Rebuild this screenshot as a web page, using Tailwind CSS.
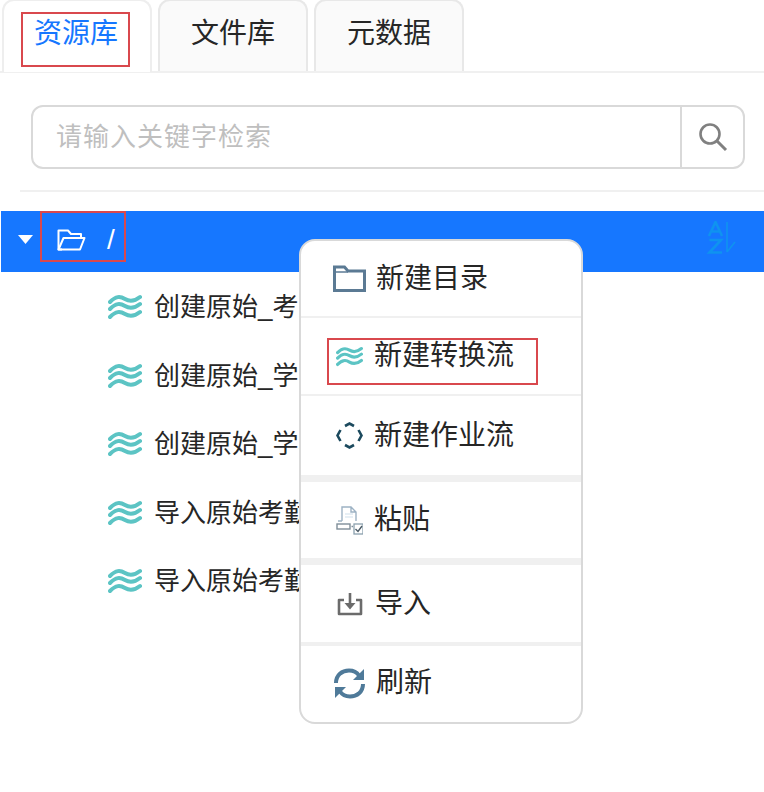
<!DOCTYPE html>
<html lang="zh-CN">
  <head>
    <meta charset="UTF-8" />
    <title>资源库</title>
    <script src="https://cdn.jsdelivr.net/npm/@tailwindcss/browser@4"></script>
  </head>
  <body class="bg-white text-[#262626] font-['Liberation_Sans','Noto_Sans_CJK_SC',sans-serif]">
    <svg class="hidden">
      <symbol id="waves" viewBox="0 0 34 26">
        <g fill="none" stroke="#5cc4c4" stroke-width="4" stroke-linecap="round">
          <path d="M2 8 C8 2 12 2 17 5 C22 8 27 7 32 3" />
          <path d="M2 15 C8 9 12 9 17 12 C22 15 27 14 32 10" />
          <path d="M2 23 C8 17 12 17 17 20 C22 23 27 22 32 18" />
        </g>
      </symbol>
    </svg>

    <div class="relative w-[764px] h-[792px] overflow-hidden">
      <!-- tabs -->
      <div class="h-[73px] flex gap-[6px] pl-[2px] border-b-2 border-[#f0f0f0]">
        <div class="w-[150px] h-[73px] -mt-px bg-white border-2 border-b-0 border-[#eeeeee] rounded-t-xl flex items-center justify-center pb-[5px] text-[28px] leading-none text-[#1677ff] pr-[2px]">资源库</div>
        <div class="w-[150px] h-[72px] -mt-px bg-[#fafafa] border-2 border-b-0 border-[#e8e8e8] rounded-t-xl flex items-center justify-center pb-[5px] text-[28px] leading-none">文件库</div>
        <div class="w-[150px] h-[72px] -mt-px bg-[#fafafa] border-2 border-b-0 border-[#e8e8e8] rounded-t-xl flex items-center justify-center pb-[5px] text-[28px] leading-none">元数据</div>
      </div>

      <!-- search -->
      <div class="ml-[31px] mt-[32px] w-[714px] h-[64px] flex border-2 border-[#d9d9d9] rounded-xl">
        <div class="flex-1 flex items-center pl-[23px] text-[26px] leading-none text-[#bfbfbf] tracking-[1px]">请输入关键字检索</div>
        <div class="w-[63px] border-l-2 border-[#d9d9d9] flex items-center justify-center">
          <svg width="32" height="32" viewBox="0 0 32 32" fill="none" stroke="#808080" stroke-width="2.6">
            <circle cx="13" cy="13" r="9.5" />
            <path d="M20 20 L29 29" stroke-width="3" />
          </svg>
        </div>
      </div>
      <div class="ml-[20px] mt-[21px] h-[2px] bg-[#f0f0f0]"></div>

      <!-- tree -->
      <div class="ml-px mt-[19px] h-[61px] bg-[#1677ff] flex items-center text-white">
        <svg class="ml-[17px] -mt-[4px]" width="15" height="9" viewBox="0 0 15 9"><path d="M0 0 H15 L7.5 9 Z" fill="#fff" /></svg>
        <svg class="ml-[24px] -mt-[4px]" width="29" height="22" viewBox="0 0 29 22" fill="none" stroke="#fff" stroke-width="2" stroke-linejoin="round">
          <path d="M5 20.5 H1.5 V1.5 H11 L14 5 H24 V9" />
          <path d="M1.5 20.5 L6.5 9 H27.5 L23 20.5 Z" />
        </svg>
        <span class="ml-[21px] -mt-[4px] text-[28px] leading-none">/</span>
        <svg class="ml-auto mr-[26px] -mt-[8px]" width="32" height="34" viewBox="0 0 32 34" fill="none" stroke="#0f93f0" stroke-width="2.6">
          <path d="M3 15 L9.5 1 L16 15 M5 10.5 H14" />
          <path d="M3.5 19 H15 L3.5 31.5 H16" />
          <path d="M21 1 V31 M21 31 L29 21" stroke-width="1.6" />
        </svg>
      </div>

      <div class="mt-[1px]">
        <div class="h-[68.5px] flex items-center pl-[108px]">
          <svg class="w-[34px] h-[26px]"><use href="#waves" /></svg>
          <span class="ml-[12px] text-[26px] leading-none">创建原始_考勤数据</span>
        </div>
        <div class="h-[68.5px] flex items-center pl-[108px]">
          <svg class="w-[34px] h-[26px]"><use href="#waves" /></svg>
          <span class="ml-[12px] text-[26px] leading-none">创建原始_学生数据</span>
        </div>
        <div class="h-[68.5px] flex items-center pl-[108px]">
          <svg class="w-[34px] h-[26px]"><use href="#waves" /></svg>
          <span class="ml-[12px] text-[26px] leading-none">创建原始_学校数据</span>
        </div>
        <div class="h-[68.5px] flex items-center pl-[108px]">
          <svg class="w-[34px] h-[26px]"><use href="#waves" /></svg>
          <span class="ml-[12px] text-[26px] leading-none">导入原始考勤数据</span>
        </div>
        <div class="h-[68.5px] flex items-center pl-[108px]">
          <svg class="w-[34px] h-[26px]"><use href="#waves" /></svg>
          <span class="ml-[12px] text-[26px] leading-none">导入原始考勤数据</span>
        </div>
      </div>

      <!-- context menu -->
      <div class="absolute left-[299px] top-[239px] w-[284px] h-[485px] bg-white border-2 border-[#d9d9d9] rounded-2xl overflow-hidden text-[28px] leading-none">
        <div class="h-[77px] flex items-center pl-[32px] border-b-2 border-[#f0f0f0]">
          <svg width="33" height="27" viewBox="0 0 33 27" fill="none" stroke="#5b7a94" stroke-width="3">
            <path d="M1.5 25.5 V2 H11.5 L15 6 H31.5 V25.5 Z" />
            <path d="M1.5 7 H15" stroke-width="1.5" />
          </svg>
          <span class="ml-[10px]">新建目录</span>
        </div>
        <div class="h-[78px] flex items-center pl-[35px] border-b-2 border-[#f0f0f0]">
          <svg class="w-[27px] h-[21px]"><use href="#waves" /></svg>
          <span class="ml-[11px]">新建转换流</span>
        </div>
        <div class="h-[79px] flex items-center pl-[35px] border-b-[7px] border-[#f0f0f0] box-content">
          <svg width="27" height="27" viewBox="0 0 27 27" fill="none" stroke="#1c4a5e" stroke-width="2.6">
            <path d="M9 4 L13.5 1.5 L18 4" />
            <path d="M22.5 8 L25.5 13.5 L22.5 19" />
            <path d="M18 23 L13.5 25.5 L9 23" />
            <path d="M4.5 19 L1.5 13.5 L4.5 8" />
          </svg>
          <span class="ml-[11px]">新建作业流</span>
        </div>
        <div class="h-[76px] flex items-center pl-[35px] border-b-[7px] border-[#f0f0f0] box-content">
          <svg width="27" height="29" viewBox="0 0 27 29" fill="none">
            <path d="M6 15 V1 H15 L20 6 V15 M6 15 H2 M15 1 V6 H20" stroke="#9db2c4" stroke-width="1.4" />
            <path d="M9 8 H17 M9 11 H17" stroke="#cfe0ec" stroke-width="1.2" />
            <rect x="1" y="18" width="13" height="5" stroke="#7f8e99" stroke-width="1.4" />
            <path d="M15.5 20.5 H17" stroke="#7f8e99" stroke-width="1.4" />
            <rect x="18" y="18" width="9" height="10" stroke="#8ba0ae" stroke-width="1.3" />
            <path d="M19.5 23 L22 25.5 L26 20" stroke="#4b5b66" stroke-width="1.4" />
          </svg>
          <span class="ml-[11px]">粘贴</span>
        </div>
        <div class="h-[77px] flex items-center pl-[36px] border-b-4 border-[#f0f0f0] box-content">
          <svg width="26" height="24" viewBox="0 0 26 24" fill="none" stroke="#6b6b6b" stroke-width="2.6">
            <path d="M7 8 H2 V22 H24 V8 H19" stroke-linejoin="round" />
            <path d="M13 1 V14" />
            <path d="M7.5 11 H18.5 L13 17.5 Z" fill="#6b6b6b" stroke="none" />
          </svg>
          <span class="ml-[12px]">导入</span>
        </div>
        <div class="h-[74px] flex items-center pl-[32px]">
          <svg width="33" height="33" viewBox="0 0 33 33" fill="none" stroke="#4f7a99" stroke-width="4">
            <path d="M3 16 C3 8 9 3.5 16 3.5 C20.5 3.5 24 5.5 26 8.5" />
            <path d="M30 17 C30 25 24 29.5 17 29.5 C12.5 29.5 9 27.5 7 24.5" />
            <path d="M31 2 V13 H20 Z" fill="#4f7a99" stroke="none" />
            <path d="M2 31 V20 H13 Z" fill="#4f7a99" stroke="none" />
          </svg>
          <span class="ml-[10px]">刷新</span>
        </div>
      </div>

      <!-- red annotation boxes -->
      <div class="absolute left-[21px] top-[12px] w-[109px] h-[55px] border-2 border-[#d9484d]"></div>
      <div class="absolute left-[40px] top-[211px] w-[86px] h-[51px] border-2 border-[#d9484d]"></div>
      <div class="absolute left-[327px] top-[338px] w-[211px] h-[47px] border-2 border-[#d9484d]"></div>
    </div>
  </body>
</html>
